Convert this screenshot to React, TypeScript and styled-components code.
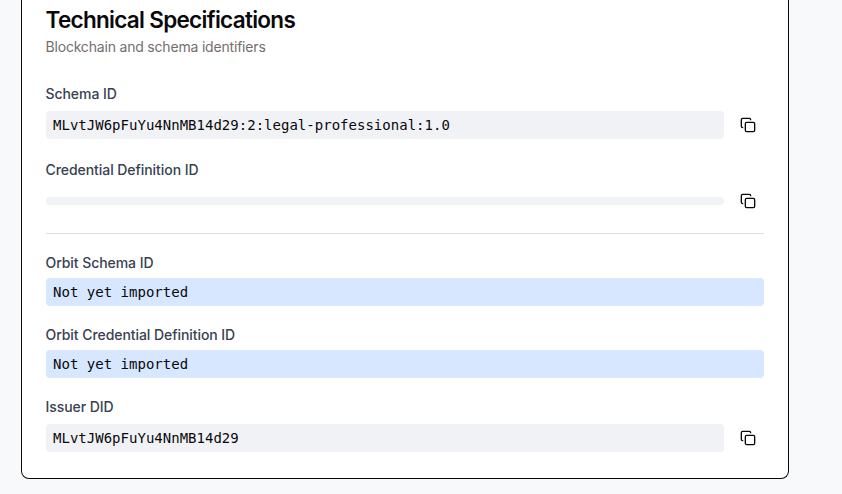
import React from "react";
import styled, { createGlobalStyle } from "styled-components";
import { Copy } from "lucide-react";

const GlobalStyle = createGlobalStyle`
  * { box-sizing: border-box; }
  body { margin: 0; background: #f8f9fb; overflow: hidden; font-family: Inter, "Liberation Sans", sans-serif; }
`;
const Page = styled.main`
  height: 494px;
  padding: 0 53px 15px 21px;
  background: #f8f9fb;
`;
const Card = styled.section`
  height: 479px;
  padding: 6px 24px 0;
  background: #fff;
  border: 1px solid #09090b;
  border-top: 0;
  border-radius: 0 0 8px 8px;
`;
const Title = styled.h2`
  margin: 0 0 0 -0.5px;
  font-size: 22.5px;
  line-height: 28px;
  font-weight: 600;
  letter-spacing: -0.7px;
  color: #09090b;
`;
const Subtitle = styled.p`
  margin: 3px 0 0 -0.5px;
  font-size: 14px;
  line-height: 20px;
  letter-spacing: -0.19px;
  color: #746e6b;
`;
const Field = styled.div<{ $gap: number }>`
  margin-top: ${(p) => p.$gap}px;
`;
const Label = styled.div`
  margin-left: -0.5px;
  font-size: 14px;
  line-height: 20px;
  font-weight: 500;
  letter-spacing: -0.06px;
  color: #374151;
`;
const Row = styled.div`
  display: flex;
  align-items: center;
  gap: 8px;
  height: 32px;
  margin-top: 5px;
`;
const Code = styled.code<{ $tone?: "blue"; $empty?: boolean }>`
  flex: 1;
  display: block;
  height: ${(p) => (p.$empty ? 8 : 28)}px;
  padding: ${(p) => (p.$empty ? 0 : "0 7px")};
  border-radius: 4px;
  background: ${(p) => (p.$tone ? "#d7e7ff" : "#f1f2f6")};
  font-family: "DejaVu Sans Mono", monospace;
  font-size: 14px;
  line-height: 28px;
  letter-spacing: 0.015px;
  color: #09090b;
`;
const CopyButton = styled.button`
  display: grid;
  place-items: center;
  width: 32px;
  height: 32px;
  padding: 0;
  border: 0;
  background: transparent;
  color: #09090b;
`;
const Divider = styled.hr`
  height: 1px;
  margin: 16px 0 0;
  border: 0;
  background: #dedfe1;
`;
const Pending = styled.div`
  display: flex;
  margin-top: 5px;
`;

function CopyableField({ label, value, gap }: { label: string; value?: string; gap: number }) {
  return (
    <Field $gap={gap}>
      <Label>{label}</Label>
      <Row>
        <Code $empty={!value}>{value}</Code>
        <CopyButton aria-label={`Copy ${label}`}><Copy size={16} /></CopyButton>
      </Row>
    </Field>
  );
}

function PendingField({ label, gap }: { label: string; gap: number }) {
  return (
    <Field $gap={gap}>
      <Label>{label}</Label>
      <Pending><Code $tone="blue">Not yet imported</Code></Pending>
    </Field>
  );
}

export default function App() {
  return (
    <Page>
      <GlobalStyle />
      <Card>
        <Title>Technical Specifications</Title>
        <Subtitle>Blockchain and schema identifiers</Subtitle>
        <CopyableField label="Schema ID" value="MLvtJW6pFuYu4NnMB14d29:2:legal-professional:1.0" gap={27} />
        <CopyableField label="Credential Definition ID" gap={19} />
        <Divider />
        <PendingField label="Orbit Schema ID" gap={19} />
        <PendingField label="Orbit Credential Definition ID" gap={19} />
        <CopyableField label="Issuer DID" value="MLvtJW6pFuYu4NnMB14d29" gap={19} />
      </Card>
    </Page>
  );
}
